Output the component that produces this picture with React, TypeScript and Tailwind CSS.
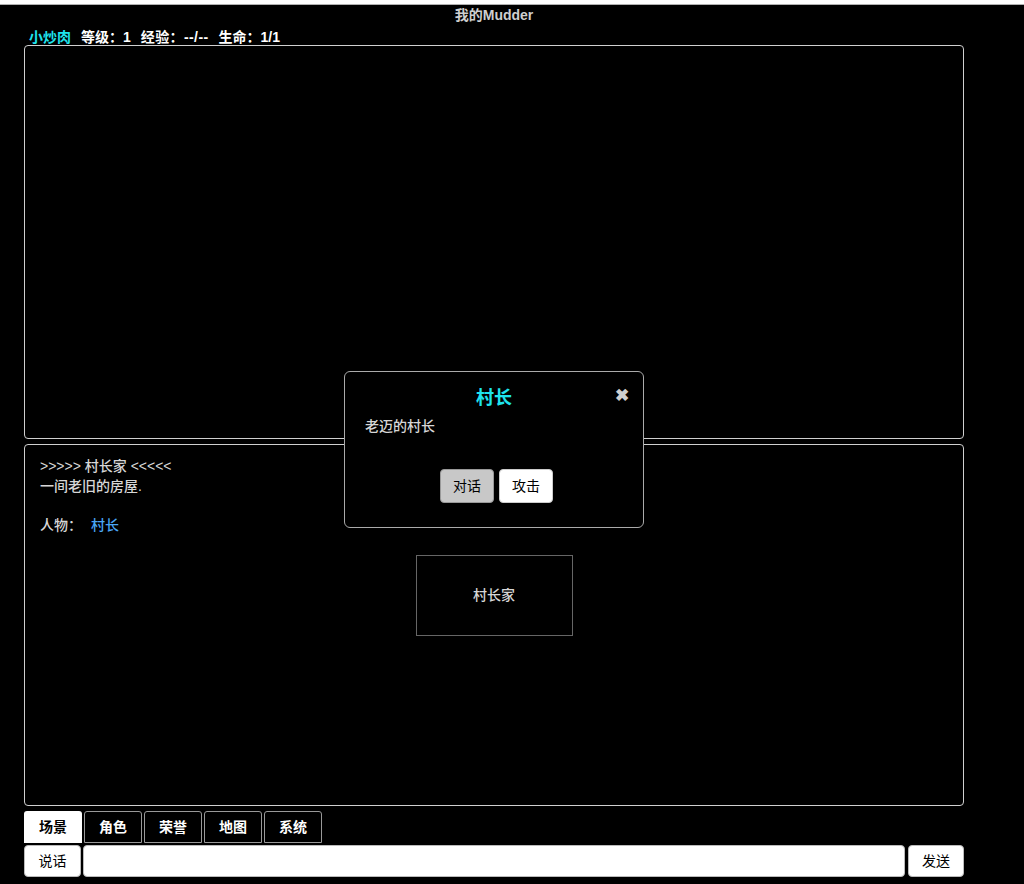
import React from 'react';

const font = { fontFamily: '"Liberation Sans", "Noto Sans CJK SC", sans-serif' };

const tabs = ['场景', '角色', '荣誉', '地图', '系统'];

const NpcDialog: React.FC = () => (
  <div className="absolute left-[344px] top-[371px] w-[300px] h-[157px] rounded-[6px] border border-[#aaaaaa] bg-black px-[20px] pt-[14px]">
    <div className="text-center text-[18px] font-bold leading-[24px] text-[#1ee4ee]">村长</div>
    <span className="absolute right-[14px] top-[14px] text-[17px] font-bold leading-[20px] text-[#cfcfcf]">✖</span>
    <div className="mt-[6px] text-[14px] font-medium leading-[20px] text-[#d6d6d6]">老迈的村长</div>
    <div className="mt-[33px] flex justify-center gap-[5px] pl-[5px]">
      <button className="h-[34px] w-[54px] rounded-[4px] border border-[#999] bg-[#c8c8c8] text-[14px] text-black">对话</button>
      <button className="h-[34px] w-[54px] rounded-[4px] border border-[#ccc] bg-white text-[14px] text-black">攻击</button>
    </div>
  </div>
);

export default function App() {
  return (
    <div className="relative min-h-[884px] w-[1024px] bg-black text-[14px]" style={font}>
      <div className="h-[4px] bg-white" />
      <div className="h-px bg-[#b0b0b0]" />

      <div className="ml-[24px] w-[940px]">
        <div className="text-center font-bold leading-[20px] text-[#cfcfcf]">我的Mudder</div>

        <div className="ml-[5px] mt-[4px] flex gap-[10px] font-bold leading-[16px] text-white">
          <span className="text-[#1ee4ee]">小炒肉</span>
          <span>等级：1</span>
          <span className="tracking-[0.4px]">经验：--/--</span>
          <span>生命：1/1</span>
        </div>

        <div className="h-[394px] rounded-[4px] border border-[#d0d0d0]" />

        <div className="mt-[5px] h-[362px] rounded-[4px] border border-[#d0d0d0] px-[15px] pt-[11px] font-medium text-[#d6d6d6]">
          <div className="leading-[20px]">&gt;&gt;&gt;&gt;&gt; 村长家 &lt;&lt;&lt;&lt;&lt;</div>
          <div className="leading-[20px]">一间老旧的房屋.</div>
          <div className="mt-[19px] leading-[20px]">
            人物：<span className="ml-[9px] text-[#4aa6f5]">村长</span>
          </div>
          <div className="mx-auto mt-[20px] flex h-[81px] w-[157px] items-center justify-center border border-[#666]">
            村长家
          </div>
        </div>

        <div className="mt-[5px] flex gap-[2px]">
          {tabs.map((t, i) => (
            <div
              key={t}
              className={
                i === 0
                  ? 'flex h-[32px] w-[58px] items-center justify-center rounded-t-[3px] bg-white font-semibold text-black'
                  : 'flex h-[32px] w-[58px] items-center justify-center rounded-t-[3px] border border-[#999] bg-black font-semibold text-white'
              }
            >
              {t}
            </div>
          ))}
        </div>

        <div className="mt-[2px] flex gap-[2px]">
          <button className="h-[32px] w-[57px] rounded-[4px] border border-[#bbb] bg-white text-black">说话</button>
          <input className="h-[32px] flex-1 rounded-[4px] border border-[#bbb] bg-white" />
          <button className="ml-[1px] h-[32px] w-[56px] rounded-[4px] border border-[#bbb] bg-white text-black">发送</button>
        </div>
      </div>

      <NpcDialog />
    </div>
  );
}
